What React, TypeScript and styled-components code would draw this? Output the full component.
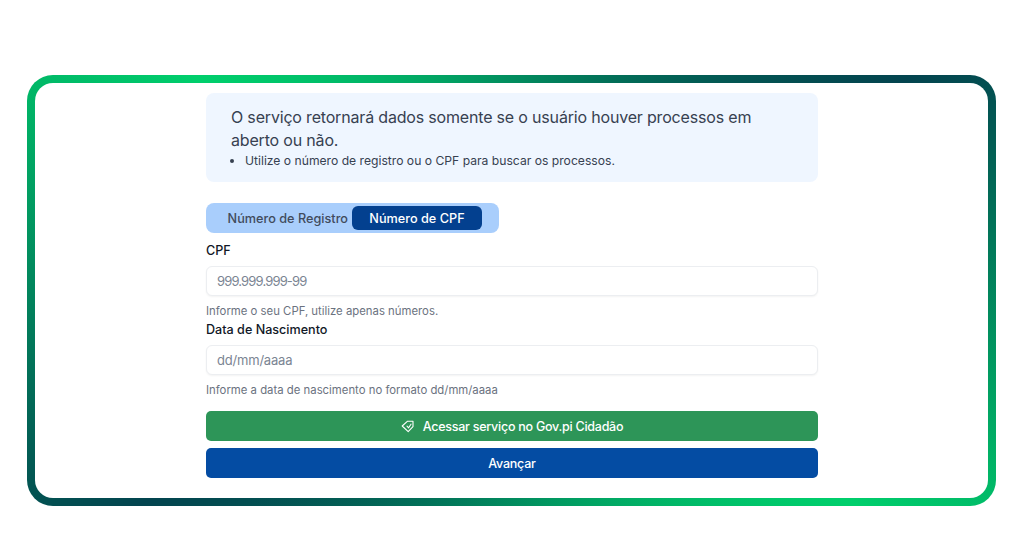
import React from "react";
import styled, { createGlobalStyle } from "styled-components";

const GlobalStyle = createGlobalStyle`
  html, body {
    margin: 0;
    padding: 0;
    background: #fff;
  }
  * {
    box-sizing: border-box;
  }
`;

const Page = styled.div`
  width: 1024px;
  height: 536px;
  padding: 75px 28px 0 27px;
  font-family: Inter, "Noto Sans", sans-serif;
  overflow: hidden;
`;

const Frame = styled.div`
  height: 431px;
  padding: 10px 0 0 171px;
  border: 8px solid transparent;
  border-radius: 26px;
  background:
    linear-gradient(#fff, #fff) padding-box,
    conic-gradient(from 304deg, #00cf6c 0deg, #03444f 118deg, #00cf6c 178deg, #03444f 296deg, #00cf6c 360deg) border-box;
`;

const Content = styled.div`
  width: 612px;
  display: flex;
  flex-direction: column;
`;

const InfoBox = styled.div`
  height: 89px;
  padding: 13px 25px;
  margin-bottom: 21px;
  background: #eff6ff;
  border-radius: 8px;
`;

const InfoTitle = styled.p`
  margin: 0;
  font-size: 16px;
  line-height: 23px;
  letter-spacing: -0.18px;
  color: #374151;
`;

const InfoList = styled.ul`
  margin: 0;
  padding: 0 0 0 14px;
  font-size: 12.15px;
  line-height: 18px;
  color: #374151;
`;

const Tabs = styled.div`
  align-self: flex-start;
  width: 293px;
  height: 30px;
  margin-bottom: 6px;
  padding: 3px 17px 3px 0;
  display: flex;
  justify-content: flex-end;
  align-items: stretch;
  gap: 4px;
  background: #a9cefc;
  border-radius: 8px;
`;

const Tab = styled.div<{ $active?: boolean }>`
  display: flex;
  align-items: center;
  justify-content: center;
  width: ${(p) => (p.$active ? "130px" : "auto")};
  font-size: 12.7px;
  font-weight: 450;
  border-radius: 6px;
  color: ${(p) => (p.$active ? "#fff" : "#414b5c")};
  background: ${(p) => (p.$active ? "#03408f" : "transparent")};
`;

const Field = styled.div`
  display: flex;
  flex-direction: column;
`;

const Label = styled.label`
  margin-top: 4px;
  font-size: 12.6px;
  line-height: 16px;
  font-weight: 450;
  color: #111827;
`;

const Input = styled.input<{ $tight?: boolean }>`
  margin-top: 7px;
  height: 30px;
  padding: 0 10px;
  border: 1px solid #eceef1;
  border-radius: 6px;
  box-shadow: 0 1px 2px rgba(0, 0, 0, 0.05);
  background: #fff;
  font-family: inherit;
  font-size: 13px;
  letter-spacing: ${(p) => (p.$tight ? "-0.85px" : "-0.2px")};
  color: #111827;
  outline: none;

  &::placeholder {
    color: #7b8593;
    opacity: 1;
  }
`;

const Hint = styled.p`
  margin: 8px 0 0;
  font-size: 11.35px;
  line-height: 14px;
  color: #6b7280;
`;

const ActionButton = styled.button<{ $color: string; $top: number }>`
  height: 30px;
  margin-top: ${(p) => p.$top}px;
  display: flex;
  align-items: center;
  justify-content: center;
  gap: 8px;
  border: none;
  border-radius: 5px;
  background: ${(p) => p.$color};
  color: #fff;
  font-family: inherit;
  font-size: 12.5px;
  font-weight: 450;
  letter-spacing: -0.25px;
`;

function TagCheckIcon() {
  return (
    <svg width="14" height="14" viewBox="0 0 14 14" fill="none" stroke="#fff" strokeWidth="1.1" strokeLinejoin="round" strokeLinecap="round">
      <path d="M1.2 7 L6.6 2.2 H12 V7.6 L7.2 12.6 Z" />
      <path d="M6 7.2 L7.6 8.8 L10 5.2" />
    </svg>
  );
}

export default function App() {
  return (
    <>
      <GlobalStyle />
      <Page>
        <Frame>
          <Content>
            <InfoBox>
              <InfoTitle>O serviço retornará dados somente se o usuário houver processos em aberto ou não.</InfoTitle>
              <InfoList>
                <li>Utilize o número de registro ou o CPF para buscar os processos.</li>
              </InfoList>
            </InfoBox>

            <Tabs>
              <Tab>Número de Registro</Tab>
              <Tab $active>Número de CPF</Tab>
            </Tabs>

            <Field>
              <Label>CPF</Label>
              <Input $tight placeholder="999.999.999-99" />
              <Hint>Informe o seu CPF, utilize apenas números.</Hint>
            </Field>

            <Field>
              <Label>Data de Nascimento</Label>
              <Input placeholder="dd/mm/aaaa" />
              <Hint>Informe a data de nascimento no formato dd/mm/aaaa</Hint>
            </Field>

            <ActionButton $color="#2d9558" $top={14}>
              <TagCheckIcon />
              Acessar serviço no Gov.pi Cidadão
            </ActionButton>
            <ActionButton $color="#044ca3" $top={7}>
              Avançar
            </ActionButton>
          </Content>
        </Frame>
      </Page>
    </>
  );
}
